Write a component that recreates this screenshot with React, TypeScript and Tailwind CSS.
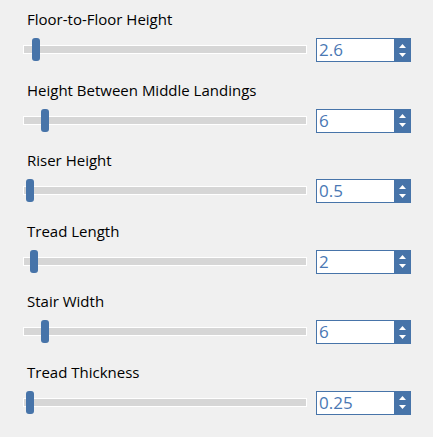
const ROWS = [
  { label: 'Floor-to-Floor Height', value: '2.6', offset: 6 },
  { label: 'Height Between Middle Landings', value: '6', offset: 15 },
  { label: 'Riser Height', value: '0.5', offset: 0 },
  { label: 'Tread Length', value: '2', offset: 4 },
  { label: 'Stair Width', value: '6', offset: 15 },
  { label: 'Tread Thickness', value: '0.25', offset: 0 },
];

function Slider({ offset }: { offset: number }) {
  return (
    <div className="relative h-6 w-[284px]">
      <div className="absolute left-0 right-0 top-[7px] h-[9px] border border-white bg-[#d6d6d6]" />
      <div
        className="absolute top-0 h-[23px] w-2 rounded-[3px] bg-[#4774a9]"
        style={{ left: 3 + offset }}
      />
    </div>
  );
}

function SpinBox({ value }: { value: string }) {
  return (
    <div className="flex h-6 w-[95px] border border-[#4774a9] bg-white">
      <div className="flex-1 pl-[2px] text-[17px] leading-[22px] text-[#4a78b4]">{value}</div>
      <div className="flex w-4 flex-col items-center justify-center gap-[5px] bg-[#4774a9]">
        <svg width="7" height="4" viewBox="0 0 7 4">
          <path d="M3.5 0L7 4H0Z" fill="white" />
        </svg>
        <svg width="7" height="4" viewBox="0 0 7 4">
          <path d="M0 0H7L3.5 4Z" fill="white" />
        </svg>
      </div>
    </div>
  );
}

export default function App() {
  return (
    <div
      className="h-[437px] w-[433px] bg-[#f0f0f0] pt-[8px]"
      style={{ fontFamily: '"Open Sans", "Noto Sans", sans-serif' }}
    >
      {ROWS.map((r) => (
        <div key={r.label} className="h-[70.6px]">
          <div className="pl-[27px] text-[15px] leading-[22px] text-black">{r.label}</div>
          <div className="mt-[8px] flex items-center pl-[23px]">
            <Slider offset={r.offset} />
            <div className="ml-[9px]">
              <SpinBox value={r.value} />
            </div>
          </div>
        </div>
      ))}
    </div>
  );
}
